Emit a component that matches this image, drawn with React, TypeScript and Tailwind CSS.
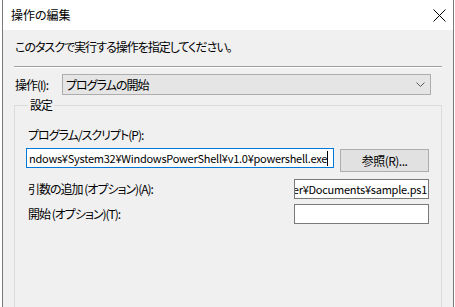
import React from "react";

// <---------- 操作の編集 ダイアログ ---------------->
const jp = "[font-family:'Noto_Sans_CJK_JP','Noto_Sans',sans-serif] [font-feature-settings:'palt']";

function CloseIcon() {
  return (
    <svg width="13" height="13" viewBox="0 0 13 13" className="block">
      <path d="M0.5 0.5 L12.5 12.5 M12.5 0.5 L0.5 12.5" stroke="#000" strokeWidth="1" />
    </svg>
  );
}

function Chevron() {
  return (
    <svg width="9" height="5" viewBox="0 0 9 5" className="block">
      <path d="M0.5 0.5 L4.5 4.5 L8.5 0.5" stroke="#5a5a5a" strokeWidth="1" fill="none" />
    </svg>
  );
}

export default function App() {
  return (
    <div className={`w-[455px] h-[307px] bg-white overflow-hidden text-[12px] tracking-[-1px] text-black ${jp}`}>
      <div className="ml-[2px] w-[452px] h-full flex flex-col border-x border-[#7a7a7a]">
        {/* タイトルバー */}
        <div className="h-[30px] shrink-0 bg-white flex items-center justify-between pl-[8px] pr-[7px]">
          <span className="leading-[16px] tracking-normal">操作の編集</span>
          <CloseIcon />
        </div>

        {/* 本体 */}
        <div className="flex-1 bg-[#f0f0f0] px-[11px]">
          <p className="mt-[9px] leading-[16px] pl-[1px]">このタスクで実行する操作を指定してください。</p>
          <div className="mt-[11px] h-[2px] border-t border-[#a0a0a0] bg-white" />

          <div className="mt-[6px] flex items-center h-[21px]">
            <span className="w-[48px] pl-[1px] leading-[16px]">操作(I):</span>
            <div className="w-[369px] h-[21px] bg-[#e5e5e5] border border-[#adadad] flex items-center justify-between pl-[3px] pr-[5px]">
              <span className="leading-[16px]">プログラムの開始</span>
              <Chevron />
            </div>
          </div>

          <fieldset className="mt-[2px] h-[220px] border border-[#dcdcdc] pl-[11px] pr-[12px] pt-[14px]">
            <legend className="ml-[2px] px-[2px] leading-[16px]">設定</legend>

            <div className="pl-[2px] leading-[16px]">プログラム/スクリプト(P):</div>
            <div className="mt-[5px] flex items-start">
              <div className="w-[308px] h-[20px] bg-white border border-[#0078d7] flex items-center pl-[2px] overflow-hidden whitespace-nowrap text-[11px] tracking-[-0.25px]">
                <span className="leading-[16px]">ndows¥System32¥WindowsPowerShell¥v1.0¥powershell.exe</span>
                <span className="w-px h-[15px] bg-black shrink-0" />
              </div>
              <button className="ml-[6px] mt-[1px] w-[89px] h-[23px] bg-[#e1e1e1] border border-[#adadad] leading-[16px] tracking-[-0.5px]">
                参照(R)...
              </button>
            </div>

            <div className="mt-[7px] flex items-center justify-between h-[20px]">
              <span className="pl-[2px] leading-[16px]">引数の追加 (オプション)(A):</span>
              <div className="w-[135px] h-[20px] bg-white border border-[#7a7a7a] flex items-center justify-end pr-[1px] overflow-hidden whitespace-nowrap text-[11px] tracking-[-0.25px]">
                <span className="leading-[16px]">C:¥Users¥user¥Documents¥sample.ps1</span>
              </div>
            </div>

            <div className="mt-[5px] flex items-center justify-between h-[20px]">
              <span className="pl-[2px] leading-[16px]">開始 (オプション)(T):</span>
              <div className="w-[135px] h-[20px] bg-white border border-[#7a7a7a]" />
            </div>
          </fieldset>
        </div>
      </div>
    </div>
  );
}
